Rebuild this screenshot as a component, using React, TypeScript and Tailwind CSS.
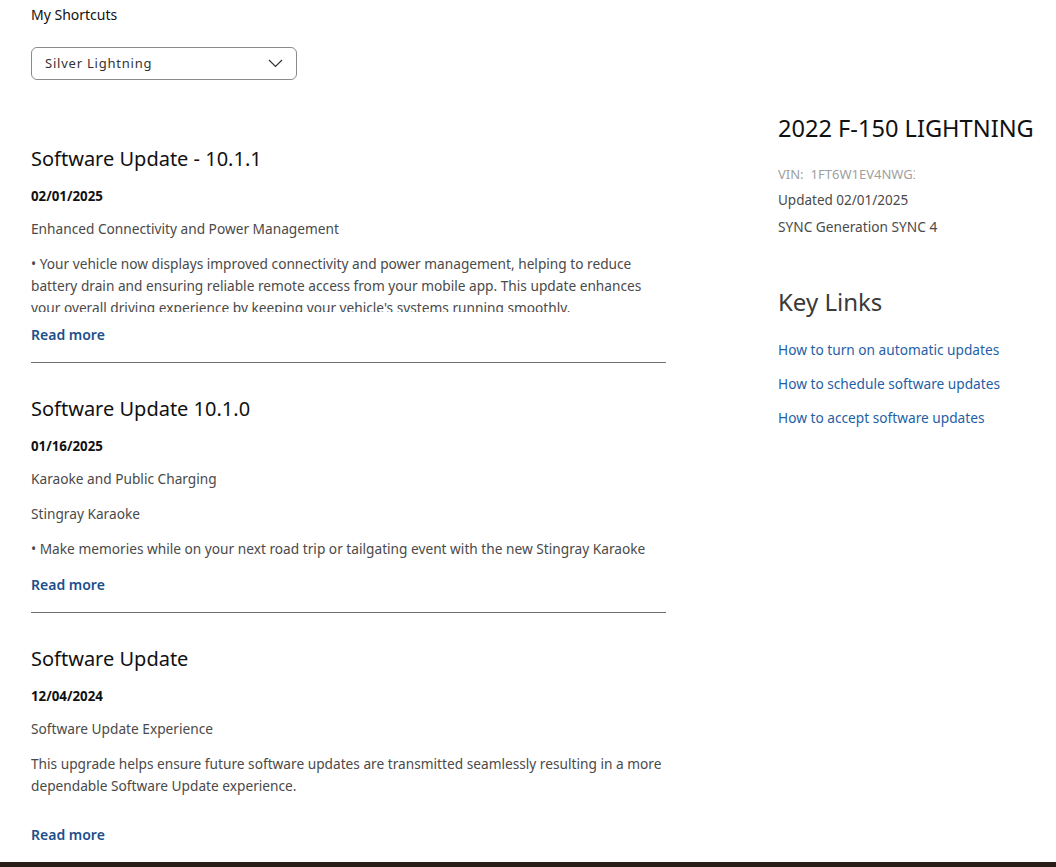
const font = { fontFamily: '"Noto Sans", "Open Sans", sans-serif' };

type Update = {
  title: string;
  date: string;
  subtitle: string;
  body: string[];
};

const updates: Update[] = [
  {
    title: "Software Update - 10.1.1",
    date: "02/01/2025",
    subtitle: "Enhanced Connectivity and Power Management",
    body: [
      "• Your vehicle now displays improved connectivity and power management, helping to reduce battery drain and ensuring reliable remote access from your mobile app. This update enhances your overall driving experience by keeping your vehicle's systems running smoothly.",
    ],
  },
  {
    title: "Software Update 10.1.0",
    date: "01/16/2025",
    subtitle: "Karaoke and Public Charging",
    body: [
      "Stingray Karaoke",
      "• Make memories while on your next road trip or tailgating event with the new Stingray Karaoke",
    ],
  },
  {
    title: "Software Update",
    date: "12/04/2024",
    subtitle: "Software Update Experience",
    body: [
      "This upgrade helps ensure future software updates are transmitted seamlessly resulting in a more dependable Software Update experience.",
    ],
  },
];

const UpdateItem = ({ item, last }: { item: Update; last: boolean }) => {
  return (
    <div className={last ? "" : "border-b border-[#707070]"}>
      <h2 className="text-[20px] leading-[30px] pt-[1px] -mb-[1px] text-[#111]">{item.title}</h2>
      <div className="mt-[13px] text-[13.3px] leading-[20px] font-bold text-[#111]">
        {item.date}
      </div>
      <p className="mt-[12px] text-[13.7px] leading-[22px] text-[#4a4a4a]">
        {item.subtitle}
      </p>
      <div className="mt-[13px] h-[59px] overflow-hidden flex flex-col gap-[13px]">
        {item.body.map((b, i) => (
          <p key={i} className="text-[13.7px] leading-[22px] text-[#4a4a4a]">
            {b}
          </p>
        ))}
      </div>
      <a className="block mt-[13px] text-[14px] leading-[20px] font-semibold text-[#1c4f8c]">
        Read more
      </a>
      <div className="h-[17px]" />
    </div>
  );
};

export default function App() {
  return (
    <div className="min-h-screen bg-white" style={font}>
      <div className="flex pl-[31px] pt-[5px]">
        <div className="w-[635px] shrink-0">
          <div className="text-[14px] leading-[20px] text-[#111]">My Shortcuts</div>
          <button className="mt-[22px] w-[266px] h-[33px] border border-[#8a8a8a] rounded-[6px] flex items-center justify-between pl-[13px] pr-[13px] text-[13px] tracking-[0.06em] text-[#333]">
            <span>Silver Lightning</span>
            <svg width="15" height="9" viewBox="0 0 15 9" fill="none">
              <path d="M1 1l6.5 6.5L14 1" stroke="#333" strokeWidth="1.2" />
            </svg>
          </button>
          <div className="mt-[63px] flex flex-col gap-[30px]">
            {updates.map((u, i) => (
              <UpdateItem key={i} item={u} last={i === updates.length - 1} />
            ))}
          </div>
        </div>
        <div className="ml-[112px] pt-[107px] whitespace-nowrap">
          <h1 className="text-[23.6px] leading-[32px] text-[#111]">2022 F-150 LIGHTNING</h1>
          <div className="mt-[20px] flex text-[13px] leading-[20px] text-[#a0a0a0]">
            <span>VIN:</span>
            <span className="ml-[7px] w-[104px] overflow-hidden">1FT6W1EV4NWG3</span>
          </div>
          <div className="mt-[6px] text-[13.5px] leading-[20px] text-[#4a4a4a]">Updated 02/01/2025</div>
          <div className="mt-[7px] text-[13.7px] leading-[20px] text-[#4a4a4a]">SYNC Generation SYNC 4</div>
          <h2 className="mt-[49px] text-[24px] leading-[32px] text-[#3a3a3a]">Key Links</h2>
          <div className="mt-[22px] flex flex-col gap-[14px] text-[13.7px] leading-[20px] text-[#1f5fa6]">
            <a>How to turn on automatic updates</a>
            <a>How to schedule software updates</a>
            <a>How to accept software updates</a>
          </div>
        </div>
      </div>
      <div className="h-[40px] bg-[#2a1c17]" />
    </div>
  );
}
